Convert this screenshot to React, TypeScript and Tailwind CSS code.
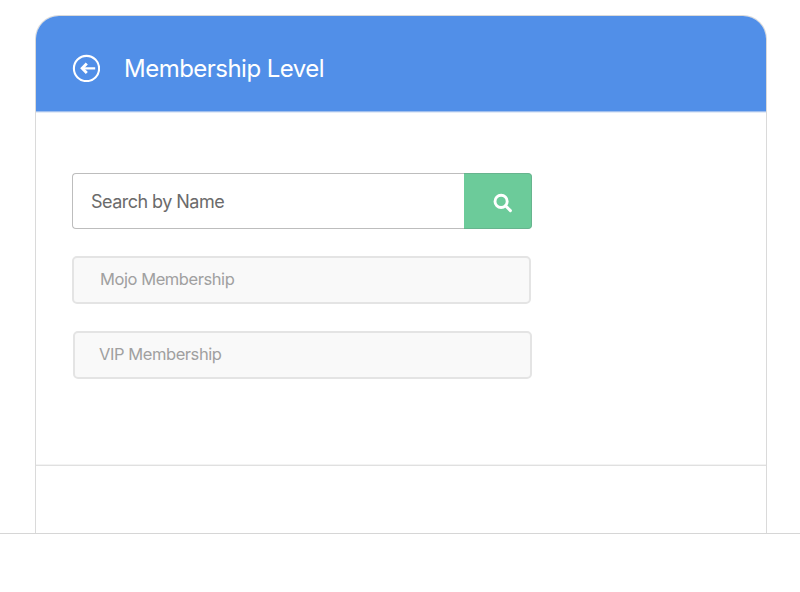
import { ReactNode } from 'react';

function BackIcon() {
    return (
        <svg className="w-7 h-7 shrink-0" viewBox="0 0 28 28" fill="none" stroke="white">
            <circle cx="14.5" cy="14.5" r="12.6" strokeWidth="2.1" />
            <path d="M23.2 14.3H10.5" strokeWidth="2.3" />
            <path d="M14.8 9.6L10.2 14.3L14.8 19" strokeWidth="2.9" />
        </svg>
    );
}

function SearchIcon() {
    return (
        <svg className="w-5 h-5" viewBox="0 0 20 20" fill="none" stroke="white">
            <circle cx="9.1" cy="8.4" r="6.1" strokeWidth="2.9" />
            <path d="M13.5 12.8L18.4 17.6" strokeWidth="3" strokeLinecap="round" />
        </svg>
    );
}

function LevelItem({ className, children }: { className: string; children: ReactNode }) {
    return (
        <div className={`flex items-center w-[459px] h-12 pb-0.5 rounded-[5px] border-2 border-[#e4e4e4] bg-[#f9f9f9] text-[16.5px] leading-6 tracking-[-0.43px] text-[#a0a0a0] ${className}`}>
            {children}
        </div>
    );
}

export default function App() {
    return (
        <div className="h-[592px] bg-white overflow-hidden font-['Inter',sans-serif]">
            <div className="h-[534px] pt-[15px] pl-[35px] border-b border-[#d6d6d6]">
                <div className="w-[732px] h-[518px] rounded-t-[24px] border border-b-0 border-[#dadada] overflow-hidden">
                    <header className="flex items-center h-24 pl-9 pt-[9px] bg-[#518fe8] border-b border-[#a0bfee] text-white">
                        <BackIcon />
                        <h1 className="ml-6 pt-0.5 text-2xl leading-8 tracking-[-0.52px] whitespace-nowrap">
                            <span>Membership Level</span>
                        </h1>
                    </header>

                    <main className="h-[354px] pt-[60px] pl-9 border-t border-t-[#e3ebf7] border-b border-b-[#e0e0e0] shadow-[inset_0_-1px_0_#f3f3f3]">
                        <div className="flex w-[460px] h-14">
                            <div className="flex items-center flex-1 pl-[18px] pt-0.5 rounded-l-[4px] border border-r-0 border-[#bdbdbd] text-lg tracking-[-0.53px] text-[#6b6b6b]">
                                <span>Search by Name</span>
                            </div>
                            <button
                                type="button"
                                aria-label="Search"
                                className="flex items-center w-[68px] pl-7 pt-1 rounded-r-[4px] border border-l-0 border-[#67b48e] bg-[#6ccb9a]"
                            >
                                <SearchIcon />
                            </button>
                        </div>

                        <LevelItem className="mt-[27px] pl-[26px]">
                            <span>Mojo Membership</span>
                        </LevelItem>
                        <LevelItem className="mt-[27px] ml-px pl-6">
                            <span>VIP Membership</span>
                        </LevelItem>
                    </main>
                </div>
            </div>
        </div>
    );
}
